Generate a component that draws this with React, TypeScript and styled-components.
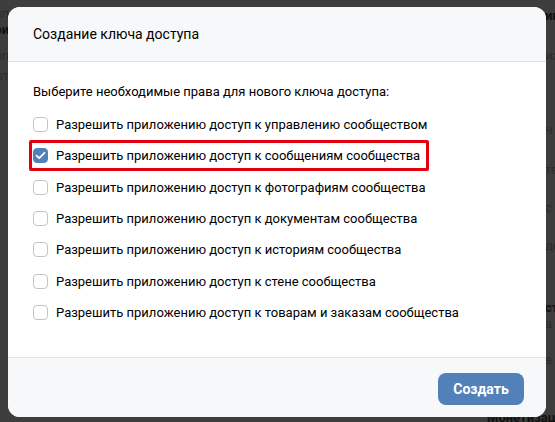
import React from "react";
import styled, { createGlobalStyle } from "styled-components";

const Global = createGlobalStyle`
  html, body { margin: 0; padding: 0; }
  body {
    width: 555px;
    height: 422px;
    overflow: hidden;
    background: #3d3d3d;
    font-family: Roboto, "Noto Sans", "Liberation Sans", sans-serif;
  }
`;

const Page = styled.div`
  position: relative;
  width: 555px;
  height: 422px;
  display: flex;
  justify-content: space-between;
  overflow: hidden;
`;

const PageCol = styled.div<{ $side: "left" | "right" }>`
  width: ${(p) => (p.$side === "left" ? "9px" : "68px")};
  overflow: hidden;
  display: flex;
  flex-direction: column;
  align-items: ${(p) => (p.$side === "left" ? "flex-end" : "flex-start")};
  padding-top: 6px;
`;

const PageLine = styled.div<{ $bold?: boolean; $gap: number; $indent?: number }>`
  margin-top: ${(p) => p.$gap}px;
  margin-left: ${(p) => p.$indent ?? 0}px;
  white-space: nowrap;
  font-size: 13px;
  line-height: 16px;
  font-weight: ${(p) => (p.$bold ? 700 : 400)};
  color: ${(p) => (p.$bold ? "#111" : "#2a2c2f")};
`;

const Overlay = styled.div`
  position: absolute;
  inset: 0;
  padding: 7px 0 0 8px;
`;

const Modal = styled.div`
  width: 538px;
  height: 410px;
  background: #fff;
  border-radius: 12px;
  overflow: hidden;
  display: flex;
  flex-direction: column;
`;

const Header = styled.div`
  height: 54px;
  flex: none;
  background: #f7f8fa;
  border-bottom: 1px solid #e1e3e6;
  display: flex;
  align-items: center;
  padding: 0 25px;
  font-size: 14px;
  color: #000;
`;

const Body = styled.div`
  flex: 1;
  padding: 20px 25px 0;
  display: flex;
  flex-direction: column;
`;

const Lead = styled.div`
  font-size: 13px;
  line-height: 20px;
  color: #000;
  margin-bottom: 7px;
`;

const Option = styled.label<{ $marked?: boolean }>`
  position: relative;
  height: 31.33px;
  display: flex;
  align-items: center;
  gap: 8px;
  font-size: 13px;
  color: #000;
  white-space: nowrap;
  ${(p) =>
    p.$marked &&
    `
    &::after {
      content: "";
      position: absolute;
      left: -4px;
      top: 0px;
      width: 400px;
      height: 31px;
      box-sizing: border-box;
      border: 3px solid #e3000f;
      border-radius: 2px;
    }
  `}
`;

const Box = styled.span<{ $checked?: boolean }>`
  width: 15px;
  height: 15px;
  box-sizing: border-box;
  flex: none;
  border-radius: 4px;
  border: 1px solid ${(p) => (p.$checked ? "#5181b8" : "#bdc5ce")};
  background: ${(p) => (p.$checked ? "#5181b8" : "#fff")};
  display: flex;
  align-items: center;
  justify-content: center;
`;

const Footer = styled.div`
  height: 60px;
  flex: none;
  background: #f7f8fa;
  border-top: 1px solid #e1e3e6;
  display: flex;
  justify-content: flex-end;
  align-items: flex-start;
  padding: 15px 22px 0;
  box-sizing: border-box;
`;

const Button = styled.button`
  width: 86px;
  height: 32px;
  border: none;
  border-radius: 8px;
  background: #5181b8;
  color: #fff;
  font-family: Roboto, "Noto Sans", "Liberation Sans", sans-serif;
  font-size: 14px;
  font-weight: 700;
  padding: 0;
`;

const options = [
  "Разрешить приложению доступ к управлению сообществом",
  "Разрешить приложению доступ к сообщениям сообщества",
  "Разрешить приложению доступ к фотографиям сообщества",
  "Разрешить приложению доступ к документам сообщества",
  "Разрешить приложению доступ к историям сообщества",
  "Разрешить приложению доступ к стене сообщества",
  "Разрешить приложению доступ к товарам и заказам сообщества",
];

const Check = () => (
  <svg width="11" height="9" viewBox="0 0 11 9">
    <path d="M1.5 4.6 L4.2 7.2 L9.5 1.8" fill="none" stroke="#fff" strokeWidth="1.8" strokeLinecap="round" strokeLinejoin="round" />
  </svg>
);

export default function App() {
  return (
    <>
      <Global />
      <Page>
        <PageCol $side="left">
          <PageLine $gap={0}>тап</PageLine>
          <PageLine $gap={0} $bold>при</PageLine>
          <PageLine $gap={10}>тпп</PageLine>
          <PageLine $gap={4}>очт</PageLine>
        </PageCol>
        <PageCol $side="right">
          <PageLine $gap={2} $indent={58} $bold>ин</PageLine>
          <PageLine $gap={24} $indent={58}>из</PageLine>
          <PageLine $gap={58} $indent={58}>н</PageLine>
          <PageLine $gap={24} $indent={58}>те</PageLine>
          <PageLine $gap={22} $indent={58}>с</PageLine>
          <PageLine $gap={22} $indent={58}>де</PageLine>
          <PageLine $gap={46} $indent={58} $bold>ст</PageLine>
          <PageLine $gap={0} $indent={58}>а</PageLine>
          <PageLine $gap={20} $indent={58}>е</PageLine>
          <PageLine $gap={42} $bold>Монетизация</PageLine>
        </PageCol>
        <Overlay>
          <Modal>
            <Header>Создание ключа доступа</Header>
            <Body>
              <Lead>Выберите необходимые права для нового ключа доступа:</Lead>
              {options.map((o, i) => (
                <Option key={o} $marked={i === 1}>
                  <Box $checked={i === 1}>{i === 1 && <Check />}</Box>
                  {o}
                </Option>
              ))}
            </Body>
            <Footer>
              <Button>Создать</Button>
            </Footer>
          </Modal>
        </Overlay>
      </Page>
    </>
  );
}
